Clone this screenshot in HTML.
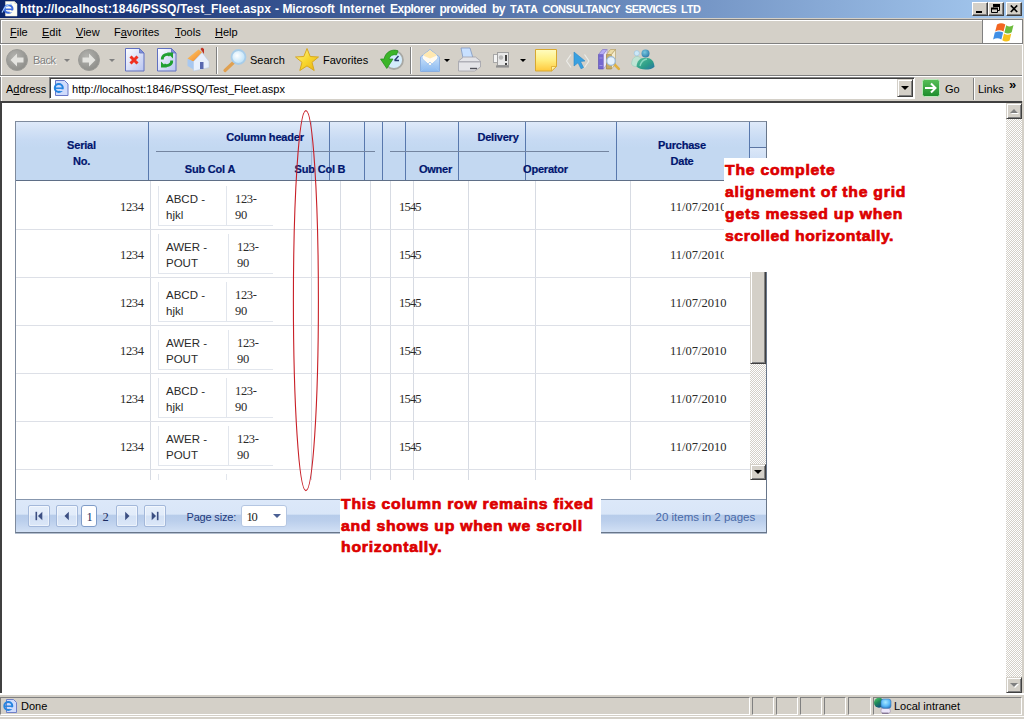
<!DOCTYPE html>
<html>
<head>
<meta charset="utf-8">
<title>IE</title>
<style>
html,body{margin:0;padding:0;}
body{width:1024px;height:719px;overflow:hidden;background:#d4d0c8;font-family:"Liberation Sans",sans-serif;font-size:11px;color:#000;position:relative;}
.abs{position:absolute;}
.t{position:absolute;white-space:nowrap;line-height:14px;}
#title{left:0;top:0;width:1024px;height:18px;background:linear-gradient(to right,#0a246a 0%,#a6caf0 100%);}
#title .t{color:#fff;font-weight:bold;font-size:12px;top:2px;}
.cb{position:absolute;top:2px;width:16px;height:14px;background:#d4d0c8;box-sizing:border-box;border:1px solid;border-color:#fff #404040 #404040 #fff;box-shadow:inset -1px -1px 0 #808080;}
#menu{left:0;top:19px;width:1024px;height:24px;background:#d4d0c8;}
#menu .t{top:6px;}
u{text-decoration:underline;}
.hsep{position:absolute;left:0;width:1024px;height:1px;}
#content{left:0;top:101px;width:1022px;height:592px;background:#fff;border-left:2px solid #404040;border-top:2px solid #404040;box-sizing:border-box;}
.chk{background-image:conic-gradient(#fff 25%,#d4d0c8 0 50%,#fff 0 75%,#d4d0c8 0);background-size:2px 2px;}
.btn3d{position:absolute;background:#d4d0c8;box-sizing:border-box;border:1px solid;border-color:#d4d0c8 #404040 #404040 #d4d0c8;box-shadow:inset 1px 1px 0 #fff,inset -1px -1px 0 #808080;}
.ser{position:absolute;white-space:nowrap;font-family:"Liberation Serif",serif;font-size:12.5px;line-height:14px;color:#2a2a2a;letter-spacing:-0.35px;}
.hd{position:absolute;white-space:nowrap;font-weight:bold;font-size:11px;line-height:14px;color:#00156e;letter-spacing:-0.2px;-webkit-text-stroke:0.2px #00156e;}
.cell{position:absolute;white-space:nowrap;font-size:11.5px;line-height:16px;color:#2a2a2a;}
.vl{position:absolute;width:1px;background:#d7dbe3;}
.hl{position:absolute;height:1px;background:#dde0e7;}
.hv{position:absolute;width:1px;background:#5878ad;top:122px;height:58px;}
.red{position:absolute;color:#dc0000;font-weight:bold;font-size:15px;line-height:22px;background:#fff;white-space:nowrap;}
.red span{display:block;transform-origin:0 50%;transform:scaleX(1.05);-webkit-text-stroke:0.7px #dc0000;letter-spacing:0.72px;}
.pb{position:absolute;top:505px;width:22px;height:22px;box-sizing:border-box;border:1px solid #a3b8da;border-radius:2px;background:linear-gradient(to bottom,#e6effb 0,#e2ecfa 45%,#d3e1f5 50%,#dbe7f8 100%);box-shadow:inset 0 0 0 1px rgba(255,255,255,0.5);}
.sp{position:absolute;top:697px;height:18px;box-sizing:border-box;border:1px solid;border-color:#808080 #fff #fff #808080;}
</style>
</head>
<body>
<!-- TITLE BAR -->
<div id="title" class="abs">
  <div class="t" style="left:20px;letter-spacing:0.122px">http://localhost:1846/PSSQ/Test_Fleet.aspx</div>
  <div class="t" style="left:275px;letter-spacing:-0.030px">-</div>
  <div class="t" style="left:282.5px;letter-spacing:-0.219px">Microsoft</div>
  <div class="t" style="left:339.5px;letter-spacing:0.183px">Internet</div>
  <div class="t" style="left:390px;letter-spacing:-0.518px">Explorer</div>
  <div class="t" style="left:439.5px;letter-spacing:-0.530px">provided</div>
  <div class="t" style="left:492px;letter-spacing:-0.530px">by</div>
  <div class="t" style="left:510px;font-size:11px;letter-spacing:0.372px">TATA</div>
  <div class="t" style="left:542.5px;font-size:11px;letter-spacing:-0.457px">CONSULTANCY</div>
  <div class="t" style="left:625px;font-size:11px;letter-spacing:-0.562px">SERVICES</div>
  <div class="t" style="left:681px;font-size:11px;letter-spacing:-0.275px">LTD</div>
  <div class="cb" style="left:972px"><div class="abs" style="left:3px;top:8px;width:6px;height:2px;background:#000"></div></div>
  <div class="cb" style="left:988px">
    <svg class="abs" style="left:2px;top:1px" width="10" height="10" viewBox="0 0 10 10"><path d="M2.5 0.5h6v2h-6zM2.5 2.5v1M8.5 2v4.500h-2" fill="none" stroke="#000" stroke-width="1"/><path d="M2 1h7" stroke="#000" stroke-width="2"/><path d="M0.500 4.500h6v4h-6z" fill="none" stroke="#000"/><path d="M0 4.500h7" stroke="#000" stroke-width="2"/></svg>
  </div>
  <div class="cb" style="left:1006px">
    <svg class="abs" style="left:3px;top:2px" width="9" height="8" viewBox="0 0 9 8"><path d="M0.800 0.500L7.200 7M7.200 0.500L0.800 7" stroke="#000" stroke-width="1.700" fill="none"/></svg>
  </div>
</div>
<div class="hsep" style="top:18px;background:#d4d0c8"></div>
<!-- MENU -->
<div id="menu" class="abs">
  <div class="abs" style="left:0;top:0;width:1022px;height:1px;background:#808080"></div>
  <div class="abs" style="left:1px;top:1px;width:981px;height:1px;background:#fff"></div>
  <div class="abs" style="left:0;top:0;width:1px;height:82px;background:#808080"></div>
  <div class="abs" style="left:1px;top:1px;width:1px;height:81px;background:#fff"></div>
  <div class="t" style="left:10px"><u>F</u>ile</div>
  <div class="t" style="left:42px"><u>E</u>dit</div>
  <div class="t" style="left:76px"><u>V</u>iew</div>
  <div class="t" style="left:114px">F<u>a</u>vorites</div>
  <div class="t" style="left:175px"><u>T</u>ools</div>
  <div class="t" style="left:215px"><u>H</u>elp</div>
  <div class="abs" style="left:982px;top:1px;width:1px;height:23px;background:#808080"></div>
  <div class="abs" id="throb" style="left:983px;top:1px;width:39px;height:23px;background:#fff"></div>
  <div class="abs" style="left:1022px;top:0;width:1px;height:25px;background:#808080"></div>
</div>
<div class="hsep" style="top:43px;background:#808080"></div>
<div class="hsep" style="top:44px;background:#fff"></div>
<!-- TOOLBAR -->
<div id="toolbar" class="abs" style="left:0;top:45px;width:1024px;height:30px;">
  <div class="t" style="left:34px;top:9px;color:#fff;letter-spacing:-0.5px">Back</div>
  <div class="t" style="left:33px;top:8px;color:#808080;letter-spacing:-0.5px">Back</div>
  <div class="t" style="left:250px;top:8px">Search</div>
  <div class="t" style="left:323px;top:8px">Favorites</div>
  <div class="abs" style="left:216px;top:2px;width:1px;height:27px;background:#808080"></div>
  <div class="abs" style="left:217px;top:2px;width:1px;height:27px;background:#fff"></div>
  <div class="abs" style="left:410px;top:2px;width:1px;height:27px;background:#808080"></div>
  <div class="abs" style="left:411px;top:2px;width:1px;height:27px;background:#fff"></div>
</div>
<div class="hsep" style="top:75px;background:#808080"></div>
<div class="hsep" style="top:76px;background:#fff"></div>
<!-- ADDRESS -->
<div id="addr" class="abs" style="left:0;top:77px;width:1024px;height:24px;">
  <div class="t" style="left:6px;top:5px">A<u>d</u>dress</div>
  <div class="abs" style="left:49px;top:0px;width:866px;height:22px;background:#fff;box-sizing:border-box;border:1px solid;border-color:#808080 #fff #fff #808080;box-shadow:inset 1px 1px 0 #404040;"></div>
  <div class="t" style="left:72px;top:5px;letter-spacing:0.02px">http://localhost:1846/PSSQ/Test_Fleet.aspx</div>
  <div class="btn3d" style="left:897px;top:2px;width:16px;height:18px;"><div class="abs" style="left:3px;top:6px;width:0;height:0;border:4px solid transparent;border-top:4px solid #000;border-bottom:0"></div></div>
  <div class="t" style="left:945px;top:5px">Go</div>
  <div class="abs" style="left:973px;top:1px;width:1px;height:22px;background:#808080"></div>
  <div class="abs" style="left:974px;top:1px;width:1px;height:22px;background:#fff"></div>
  <div class="t" style="left:978px;top:5px">Links</div>
  <div class="t" style="left:1009px;top:1px;font-weight:bold;font-size:13px">»</div>
</div>
<svg class="abs" style="left:0;top:0;z-index:10;pointer-events:none" width="1024" height="719" viewBox="0 0 1024 719">
<defs>
<linearGradient id="gPage" x1="0" y1="0" x2="1" y2="1"><stop offset="0" stop-color="#ffffff"/><stop offset="1" stop-color="#b8c4f0"/></linearGradient>
<radialGradient id="gGrey" cx="0.4" cy="0.35" r="0.7"><stop offset="0" stop-color="#b4b4b0"/><stop offset="1" stop-color="#8c8c88"/></radialGradient>
<radialGradient id="gLens" cx="0.4" cy="0.4" r="0.7"><stop offset="0" stop-color="#ffffff"/><stop offset="1" stop-color="#b0dcf8"/></radialGradient>
<linearGradient id="gStar" x1="0" y1="0" x2="1" y2="1"><stop offset="0" stop-color="#fff8a0"/><stop offset="0.5" stop-color="#f8d830"/><stop offset="1" stop-color="#e8b010"/></linearGradient>
<linearGradient id="gNote" x1="0" y1="0" x2="0" y2="1"><stop offset="0" stop-color="#fffcc0"/><stop offset="0.5" stop-color="#ffee80"/><stop offset="1" stop-color="#ffc83c"/></linearGradient>
<linearGradient id="gGo" x1="0" y1="0" x2="0" y2="1"><stop offset="0" stop-color="#58c058"/><stop offset="1" stop-color="#1c8c2c"/></linearGradient>
<linearGradient id="gMail" x1="0" y1="0" x2="0" y2="1"><stop offset="0" stop-color="#e8f4ff"/><stop offset="1" stop-color="#88b8f0"/></linearGradient>
<linearGradient id="gRoof" x1="0" y1="0" x2="1" y2="1"><stop offset="0" stop-color="#ffd070"/><stop offset="1" stop-color="#f08020"/></linearGradient>
</defs>
<!-- title icon -->
<path d="M5.500 1.500h9l2.500 2.500v12h-11.500z" fill="#fdfdf4" stroke="#e8e8d8" stroke-width="0.500"/>
<path d="M14.500 1.500v2.500h2.500" fill="#d8d8c8"/>
<ellipse cx="8.500" cy="9" rx="4" ry="3.800" fill="none" stroke="#3c6ce0" stroke-width="2"/>
<path d="M5 9.300h7.500" stroke="#3c6ce0" stroke-width="1.600"/>
<path d="M2 12.500c2-5 6-8.500 10-8.500" stroke="#a8d0ff" stroke-width="1.200" fill="none"/>
<rect x="9.500" y="10.500" width="4.500" height="2" fill="#fdfdf4"/>
<!-- back -->
<circle cx="17" cy="60" r="10.500" fill="url(#gGrey)" stroke="#9c9c98" stroke-width="1"/>
<path d="M10.500 60l6.500-6.500v4h6.500v5h-6.500v4z" fill="#e4e4e0"/>
<path d="M64 59h6l-3 3z" fill="#808080"/>
<!-- forward -->
<circle cx="89" cy="60" r="10.500" fill="url(#gGrey)" stroke="#9c9c98" stroke-width="1"/>
<path d="M95.500 60l-6.500-6.500v4h-6.500v5h6.500v4z" fill="#e4e4e0"/>
<path d="M109 59h6l-3 3z" fill="#808080"/>
<!-- stop -->
<path d="M125.500 48.500h14l4.500 4.500v18h-18.500z" fill="url(#gPage)" stroke="#6070c0" stroke-width="1"/>
<path d="M139.500 48.500v4.500h4.500z" fill="#8090d8" stroke="#6070c0" stroke-width="0.800"/>
<path d="M130.500 56.500l7 7M137.500 56.500l-7 7" stroke="#f03020" stroke-width="3" fill="none"/>
<!-- refresh -->
<path d="M157.500 48.500h14l4.500 4.500v18h-18.500z" fill="url(#gPage)" stroke="#6070c0" stroke-width="1"/>
<path d="M171.500 48.500v4.500h4.500z" fill="#8090d8" stroke="#6070c0" stroke-width="0.800"/>
<path d="M162.300 59.500a4.700 4.700 0 0 1 7.700-4" stroke="#20a030" stroke-width="2.800" fill="none"/>
<path d="M171.700 60.500a4.700 4.700 0 0 1-7.700 4" stroke="#20a030" stroke-width="2.800" fill="none"/>
<path d="M167 52.500h6v6z" fill="#20a030"/>
<path d="M167 67.500h-6v-6z" fill="#20a030"/>
<!-- home -->
<path d="M187.500 59l11.500-9.500 3.500 3.500-8 9v8l-7-4z" fill="#a8c8f0"/>
<path d="M187.500 58.500l11-9 4 3-9 9z" fill="url(#gRoof)"/>
<path d="M193.500 61.500l8.500-9 7 9v6l-15.500 3.500z" fill="#e8f0fc" stroke="#b0c8e8" stroke-width="0.500"/>
<path d="M200.500 49l1.500-1.500 2 1.500v5z" fill="#c03020"/>
<rect x="200" y="62" width="3.500" height="7" fill="#5868b0"/>
<!-- search -->
<path d="M233.500 62.500l-8.500 8" stroke="#e0a050" stroke-width="3.200" stroke-linecap="round"/>
<circle cx="238.500" cy="57" r="7" fill="url(#gLens)" stroke="#a8cce8" stroke-width="1.800"/>
<!-- favorites star -->
<path d="M307 48.500l3.200 8 8.300 0.500-6.500 5.300 2.200 8.200-7.200-4.600-7.200 4.600 2.200-8.200-6.500-5.300 8.300-0.500z" fill="url(#gStar)" stroke="#d8a820" stroke-width="1" stroke-linejoin="round"/>
<!-- history -->
<circle cx="394" cy="60" r="9" fill="#d4ecfc" stroke="#a8a8a4" stroke-width="1.800"/>
<path d="M394.500 60.500l4-4.500M394.500 60.500h4.500" stroke="#283c70" stroke-width="1.400" fill="none"/>
<path d="M398 50.800A10.200 10.200 0 0 0 384.200 59h-3.700l6.300 9.500 6.200-9.500h-4A5.800 5.800 0 0 1 396.500 55z" fill="#3cb428" stroke="#1c8c18" stroke-width="0.700" stroke-linejoin="round"/>
<!-- mail -->
<path d="M420.500 57l9.500-7.500 9.500 7.500v14.500h-19z" fill="url(#gMail)" stroke="#80a8e0" stroke-width="0.800"/>
<path d="M423 55l7-5 7 5-7 5z" fill="#ffe8b0"/>
<path d="M423 55.500l7 3 7-3v4l-7 6-7-6z" fill="#fffaf0"/>
<path d="M420.500 71.500l9.500-9.500 9.500 9.500M420.500 57l9.500 9 9.500-9" fill="none" stroke="#a0c4f0" stroke-width="0.800"/>
<path d="M444 59h6l-3 3z" fill="#000"/>
<!-- print -->
<path d="M461 48h9l3 10h-10z" fill="#c8e0ff" stroke="#8098c0" stroke-width="0.800"/>
<path d="M458.500 61l5-4h12l5 4v6l-6 4h-16z" fill="#e4e4e8" stroke="#a0a0a8" stroke-width="0.800"/>
<path d="M458.500 61h21.500v1.500h-21.500z" fill="#b0b0b8"/>
<path d="M470 68.500h7" stroke="#505058" stroke-width="1.400"/>
<!-- edit (grey) -->
<rect x="493.500" y="54.500" width="9" height="8" fill="#f4f4f4" stroke="#a8a8a8"/>
<rect x="497.500" y="52.500" width="11" height="13" fill="#e8e8e8" stroke="#a0a0a0"/>
<circle cx="501" cy="57.500" r="2.200" fill="#b8b8b8"/>
<rect x="505" y="55" width="2" height="6" fill="#404040"/>
<rect x="505" y="63" width="2" height="2" fill="#404040"/>
<path d="M496 66.500h13" stroke="#909090" stroke-width="2.200"/>
<path d="M520 59h6l-3 3z" fill="#000"/>
<!-- note -->
<path d="M535.500 49.500h21v17l-5 4.500h-16z" fill="url(#gNote)" stroke="#d8a830" stroke-width="1"/>
<path d="M556.500 66.500h-5v4.500z" fill="#fff0a0" stroke="#d8a830" stroke-width="0.800"/>
<!-- cursor -->
<path d="M566.500 61l4.500-6.500M566.500 61l4.500 6.500M589 61l-4.500-6.500M589 61l-4.500 6.500" stroke="#ecece8" stroke-width="1.200" fill="none"/>
<path d="M574 52l11 9-4.500 0.500 3 6-2.500 1.300-3-6-4 3.200z" fill="#38a0e0" stroke="#2888c8" stroke-width="0.600"/>
<!-- books -->
<path d="M598.500 54.500h5v14.500h-5z" fill="#7468d0" stroke="#5848b0" stroke-width="0.600"/>
<path d="M598.500 54.500l4-5h4.500l-3.500 5z" fill="#b4acf4" stroke="#6858c0" stroke-width="0.500"/>
<path d="M603.500 54.500l3.500-5v14.500l-3.500 5z" fill="#ece8fa" stroke="#8878c8" stroke-width="0.500"/>
<path d="M599.500 58h3M599.500 65.500h3" stroke="#a8a0e8" stroke-width="0.800"/>
<path d="M606.500 54.500h5v14.500h-5z" fill="#c8ac60" stroke="#987c38" stroke-width="0.600"/>
<path d="M606.500 54.500l4-5h5l-4 5z" fill="#ecdca8" stroke="#a88c48" stroke-width="0.500"/>
<path d="M611.500 54.500l4-5v14.500l-4 5z" fill="#f4ecd0" stroke="#a89050" stroke-width="0.500"/>
<path d="M614.500 64.500l4.300 4.300" stroke="#e0b040" stroke-width="2.600" stroke-linecap="round"/>
<circle cx="611" cy="61" r="4.300" fill="#e4f2ff" stroke="#9cb8d4" stroke-width="1.300"/>
<!-- messenger -->
<defs><linearGradient id="gMs1" x1="0" y1="0" x2="1" y2="1"><stop offset="0" stop-color="#58c098"/><stop offset="0.600" stop-color="#2c9c88"/><stop offset="1" stop-color="#2870a8"/></linearGradient>
<radialGradient id="gMs2" cx="0.400" cy="0.350" r="0.700"><stop offset="0" stop-color="#78c8e0"/><stop offset="1" stop-color="#2c78a8"/></radialGradient></defs>
<circle cx="636.800" cy="53.200" r="2.600" fill="#cce8f8" stroke="#88b8d8" stroke-width="0.500"/>
<path d="M631.500 64c0.500-5 2.500-7.500 5.500-7.500s5 2 5.500 6l-4 4c-3 0.500-6 0-7-2.500z" fill="#c0e4d4" stroke="#90c8b8" stroke-width="0.500"/>
<circle cx="645.500" cy="53.500" r="4" fill="url(#gMs2)"/>
<path d="M636.500 66.500c0.500-6 3.500-8.800 9-8.800s8.500 3 9 9c-1.500 2-5.500 2.800-9 2.800s-7.500-1-9-3z" fill="url(#gMs1)"/>
<path d="M640 66c1-4 3.500-6.500 7-7" stroke="#88d8c0" stroke-width="1.300" fill="none"/>
<!-- address icon -->
<path d="M55.500 80.500h9l3.500 3.500v11.500h-12.500z" fill="#d0dcfc" stroke="#6878c8" stroke-width="1"/>
<ellipse cx="58.800" cy="88" rx="4" ry="4" fill="none" stroke="#2484e0" stroke-width="2"/>
<path d="M55 88.200h8" stroke="#2484e0" stroke-width="1.500"/>
<rect x="60" y="89.300" width="4.500" height="1.800" fill="#d0dcfc"/>
<!-- go -->
<rect x="922.500" y="79.500" width="17" height="17" rx="2" fill="url(#gGo)" stroke="#b8e8b8" stroke-width="1"/>
<path d="M925 88h10M931 83.500l4.500 4.500-4.500 4.500" stroke="#fff" stroke-width="2" fill="none"/>
<!-- windows flag -->
<path d="M997 24.500q4-2.500 8.300 0l-1.800 7q-4-2.300-8.300 0z" fill="#f26522"/>
<path d="M1006.200 25.300q3.800 2.500 7.300-0.300l-1.800 7.200q-3.600 2.500-7.300 0.200z" fill="#6cbb3c"/>
<path d="M994.800 32.600q4.200-2.400 8.300 0l-1.700 6.800q-4.200-2.300-8.300 0z" fill="#3f8fe6"/>
<path d="M1004 33.500q3.700 2.400 7.300 0l-1.700 7q-3.700 2.300-7.300-0.200z" fill="#f6c21c"/>
<!-- status ie icon -->
<path d="M6.500 699.500h7l3 3v10h-10z" fill="#d0dcfc" stroke="#7080c8" stroke-width="1"/>
<ellipse cx="8.300" cy="706" rx="4" ry="4" fill="none" stroke="#2484e0" stroke-width="2"/>
<path d="M4.500 706.200h8" stroke="#2484e0" stroke-width="1.500"/>
<rect x="9.500" y="707.300" width="4.500" height="1.800" fill="#d0dcfc"/>
<!-- local intranet icon -->
<defs><linearGradient id="gGlobe" x1="0" y1="0" x2="0.600" y2="1"><stop offset="0" stop-color="#58d070"/><stop offset="0.500" stop-color="#208858"/><stop offset="1" stop-color="#0c4c84"/></linearGradient>
<radialGradient id="gMon" cx="0.450" cy="0.350" r="0.700"><stop offset="0" stop-color="#a8e8ff"/><stop offset="0.600" stop-color="#58b8f8"/><stop offset="1" stop-color="#2c78c0"/></radialGradient></defs>
<circle cx="879" cy="702.800" r="5" fill="url(#gGlobe)"/>
<path d="M883 713.300c-2-0.300-2.500-2-1.500-5h8c1.500 3 1 4.700-1 5z" fill="#ece6fa" stroke="#8c7ca0" stroke-width="0.500"/>
<path d="M882 713.200h6.500" stroke="#5c4870" stroke-width="0.800"/>
<rect x="881" y="699" width="10" height="9.300" rx="2.500" fill="url(#gMon)" stroke="#3c78b8" stroke-width="0.600"/>
</svg>

<!-- CONTENT -->
<div id="content" class="abs"></div>
<div class="abs" style="left:15px;top:121px;width:752px;height:412px;box-sizing:border-box;border:1px solid #7f8b9d;border-right-color:#68768a;border-bottom-color:#68768a;"></div>
<div class="abs" style="left:16px;top:122px;width:750px;height:58px;background:linear-gradient(to bottom,#dfeafa 0,#d3e2f6 8px,#c7daf3 18px,#c3d8f1 26px,#c3d8f1 100%);"></div>
<div class="abs" style="left:16px;top:180px;width:750px;height:1px;background:#5f6f87"></div>
<div class="hv" style="left:148px"></div>
<div class="hv" style="left:329px"></div>
<div class="hv" style="left:364px"></div>
<div class="hv" style="left:382px"></div>
<div class="hv" style="left:405px"></div>
<div class="hv" style="left:458px"></div>
<div class="hv" style="left:525px"></div>
<div class="hv" style="left:616px"></div>
<div class="hv" style="left:749px"></div>
<div class="hv" style="left:311px;top:122px;height:29px;background:#b4c8e6"></div>
<div class="hv" style="left:311px;top:152px;height:28px;background:#9fb6d8"></div>
<div class="abs" style="left:156px;top:151px;width:219px;height:1px;background:#7485a0"></div>
<div class="abs" style="left:390px;top:151px;width:219px;height:1px;background:#7485a0"></div>
<div class="abs" style="left:750px;top:148px;width:16px;height:32px;background:linear-gradient(to bottom,#dbe7f8 0,#c7daf3 18px,#c3d8f1 26px)"></div>
<div class="abs" style="left:750px;top:147px;width:16px;height:1px;background:#5b75a3"></div>
<div class="hd" style="left:-18.5px;width:200px;text-align:center;top:138px">Serial</div>
<div class="hd" style="left:-18.5px;width:200px;text-align:center;top:154px">No.</div>
<div class="hd" style="left:165px;width:200px;text-align:center;top:130px">Column header</div>
<div class="hd" style="left:110px;width:200px;text-align:center;top:162px">Sub Col A</div>
<div class="hd" style="left:220px;width:200px;text-align:center;top:162px">Sub Col B</div>
<div class="hd" style="left:335.5px;width:200px;text-align:center;top:162px">Owner</div>
<div class="hd" style="left:398px;width:200px;text-align:center;top:130px">Delivery</div>
<div class="hd" style="left:445.5px;width:200px;text-align:center;top:162px">Operator</div>
<div class="hd" style="left:582px;width:200px;text-align:center;top:138px">Purchase</div>
<div class="hd" style="left:582px;width:200px;text-align:center;top:154px">Date</div>
<div class="vl" style="left:150px;top:181px;height:299px"></div>
<div class="vl" style="left:311px;top:181px;height:299px"></div>
<div class="vl" style="left:340px;top:181px;height:299px"></div>
<div class="vl" style="left:370px;top:181px;height:299px"></div>
<div class="vl" style="left:390px;top:181px;height:299px"></div>
<div class="vl" style="left:413px;top:181px;height:299px"></div>
<div class="vl" style="left:468px;top:181px;height:299px"></div>
<div class="vl" style="left:535px;top:181px;height:299px"></div>
<div class="vl" style="left:630px;top:181px;height:299px"></div>
<div class="hl" style="left:16px;top:229px;width:734px"></div>
<div class="hl" style="left:16px;top:277px;width:734px"></div>
<div class="hl" style="left:16px;top:325px;width:734px"></div>
<div class="hl" style="left:16px;top:373px;width:734px"></div>
<div class="hl" style="left:16px;top:421px;width:734px"></div>
<div class="hl" style="left:16px;top:469px;width:734px"></div>
<div class="ser" style="left:120px;top:200px">1234</div>
<div class="ser" style="left:399px;top:200px;letter-spacing:-0.8px">1545</div>
<div class="ser" style="left:670px;top:200px;letter-spacing:0px">11/07/2010</div>
<div class="vl" style="left:158px;top:186px;height:40px;background:#e2e6ed"></div>
<div class="vl" style="left:226px;top:186px;height:40px;background:#e2e6ed"></div>
<div class="hl" style="left:158px;top:225px;width:115px;background:#e2e6ed"></div>
<div class="cell" style="left:166px;top:190.7px">ABCD -<br>hjkl</div>
<div class="ser" style="left:235px;top:190.5px;line-height:16px">123-<br>90</div>
<div class="ser" style="left:120px;top:248px">1234</div>
<div class="ser" style="left:399px;top:248px;letter-spacing:-0.8px">1545</div>
<div class="ser" style="left:670px;top:248px;letter-spacing:0px">11/07/2010</div>
<div class="vl" style="left:158px;top:234px;height:40px;background:#e2e6ed"></div>
<div class="vl" style="left:228px;top:234px;height:40px;background:#e2e6ed"></div>
<div class="hl" style="left:158px;top:273px;width:115px;background:#e2e6ed"></div>
<div class="cell" style="left:166px;top:238.7px">AWER -<br>POUT</div>
<div class="ser" style="left:237px;top:238.5px;line-height:16px">123-<br>90</div>
<div class="ser" style="left:120px;top:296px">1234</div>
<div class="ser" style="left:399px;top:296px;letter-spacing:-0.8px">1545</div>
<div class="ser" style="left:670px;top:296px;letter-spacing:0px">11/07/2010</div>
<div class="vl" style="left:158px;top:282px;height:40px;background:#e2e6ed"></div>
<div class="vl" style="left:226px;top:282px;height:40px;background:#e2e6ed"></div>
<div class="hl" style="left:158px;top:321px;width:115px;background:#e2e6ed"></div>
<div class="cell" style="left:166px;top:286.7px">ABCD -<br>hjkl</div>
<div class="ser" style="left:235px;top:286.5px;line-height:16px">123-<br>90</div>
<div class="ser" style="left:120px;top:344px">1234</div>
<div class="ser" style="left:399px;top:344px;letter-spacing:-0.8px">1545</div>
<div class="ser" style="left:670px;top:344px;letter-spacing:0px">11/07/2010</div>
<div class="vl" style="left:158px;top:330px;height:40px;background:#e2e6ed"></div>
<div class="vl" style="left:228px;top:330px;height:40px;background:#e2e6ed"></div>
<div class="hl" style="left:158px;top:369px;width:115px;background:#e2e6ed"></div>
<div class="cell" style="left:166px;top:334.7px">AWER -<br>POUT</div>
<div class="ser" style="left:237px;top:334.5px;line-height:16px">123-<br>90</div>
<div class="ser" style="left:120px;top:392px">1234</div>
<div class="ser" style="left:399px;top:392px;letter-spacing:-0.8px">1545</div>
<div class="ser" style="left:670px;top:392px;letter-spacing:0px">11/07/2010</div>
<div class="vl" style="left:158px;top:378px;height:40px;background:#e2e6ed"></div>
<div class="vl" style="left:226px;top:378px;height:40px;background:#e2e6ed"></div>
<div class="hl" style="left:158px;top:417px;width:115px;background:#e2e6ed"></div>
<div class="cell" style="left:166px;top:382.7px">ABCD -<br>hjkl</div>
<div class="ser" style="left:235px;top:382.5px;line-height:16px">123-<br>90</div>
<div class="ser" style="left:120px;top:440px">1234</div>
<div class="ser" style="left:399px;top:440px;letter-spacing:-0.8px">1545</div>
<div class="ser" style="left:670px;top:440px;letter-spacing:0px">11/07/2010</div>
<div class="vl" style="left:158px;top:426px;height:40px;background:#e2e6ed"></div>
<div class="vl" style="left:228px;top:426px;height:40px;background:#e2e6ed"></div>
<div class="hl" style="left:158px;top:465px;width:115px;background:#e2e6ed"></div>
<div class="cell" style="left:166px;top:430.7px">AWER -<br>POUT</div>
<div class="ser" style="left:237px;top:430.5px;line-height:16px">123-<br>90</div>
<div class="vl" style="left:158px;top:474px;height:6px;background:#e2e6ed"></div>
<div class="vl" style="left:226px;top:474px;height:6px;background:#e2e6ed"></div>
<div class="abs chk" style="left:750px;top:181px;width:16px;height:299px"></div>
<div class="btn3d" style="left:750px;top:181px;width:16px;height:16px"></div>
<div class="btn3d" style="left:750px;top:197px;width:16px;height:167px"></div>
<div class="btn3d" style="left:750px;top:464px;width:16px;height:16px"><div class="abs" style="left:3px;top:5px;width:0;height:0;border:4px solid transparent;border-top:4px solid #000;border-bottom:0"></div></div>
<div class="abs" style="left:16px;top:499px;width:750px;height:1px;background:#8797ae"></div>
<div class="abs" style="left:15px;top:533px;width:752px;height:1px;background:#b4bfcf"></div>
<div class="abs" style="left:16px;top:500px;width:750px;height:32px;background:linear-gradient(to bottom,#dce8f9 0,#d9e6f8 14px,#b7ccea 15.5px,#bbcfec 21px,#d0dff4 31px,#d4e2f6 100%);"></div>
<div class="pb" style="left:28px"></div>
<div class="pb" style="left:56px"></div>
<div class="pb" style="left:116px"></div>
<div class="pb" style="left:144px"></div>
<svg class="abs" style="left:28px;top:505px" width="140" height="22" viewBox="28 505 140 22"><rect x="35.500" y="511.800" width="1.600" height="8.400" fill="#3c4f82"/><path d="M42.300 511.800v8.400l-4.300-4.200z" fill="#3c4f82"/><path d="M68.800 511.800v8.400l-4.300-4.200z" fill="#3c4f82"/><path d="M125.200 511.800v8.400l4.300-4.200z" fill="#3c4f82"/><path d="M151.700 511.800v8.400l4.300-4.200z" fill="#3c4f82"/><rect x="156.900" y="511.800" width="1.600" height="8.400" fill="#3c4f82"/></svg>
<div class="abs" style="left:81px;top:505px;width:16px;height:22px;box-sizing:border-box;border:1px solid #7f9cc8;border-radius:3px;background:#fff"></div>
<div class="ser" style="left:86.500px;top:509.500px;color:#1a2a60;font-size:12.500px">1</div>
<div class="ser" style="left:102.500px;top:509.500px;color:#1a2a60;font-size:12.500px">2</div>
<div class="t" style="left:186.500px;top:509.500px;font-size:11px;color:#1e3a7c;letter-spacing:-0.18px">Page size:</div>
<div class="abs" style="left:241px;top:505px;width:46px;height:22px;box-sizing:border-box;border:1px solid #b4c6e2;border-radius:3px;background:#fff"></div>
<div class="ser" style="left:246.500px;top:510px;color:#222;letter-spacing:-1.2px">10</div>
<div class="abs" style="left:273px;top:514px;width:0;height:0;border:4px solid transparent;border-top:4px solid #4a6094;border-bottom:0"></div>
<div class="t" style="left:655.500px;top:510px;font-size:11.500px;color:#4a6aa8">20 items in 2 pages</div>
<svg class="abs" style="left:285px;top:105px" width="42" height="392" viewBox="285 105 42 392"><ellipse cx="305.9" cy="300.6" rx="12.5" ry="190" fill="none" stroke="#c81e26" stroke-width="1.1"/></svg>
<div class="red" style="left:724px;top:158px;width:199px;height:114px;padding-left:1px"><span style="margin-top:1px">The complete</span><span>alignement of the grid</span><span>gets messed up when</span><span style="letter-spacing:0.55px">scrolled horizontally.</span></div>
<div class="red" style="left:340px;top:493px;width:260px;height:68px;line-height:21.5px;padding-left:1px"><span>This column row remains fixed</span><span>and shows up when we scroll</span><span>horizontally.</span></div>
<!-- main scrollbar -->
<div class="abs chk" style="left:1006px;top:103px;width:16px;height:590px;"></div>
<div class="btn3d" style="left:1006px;top:103px;width:16px;height:16px;"><div class="abs" style="left:4px;top:6px;width:0;height:0;border:4px solid transparent;border-bottom:4px solid #fff;border-top:0"></div><div class="abs" style="left:3px;top:5px;width:0;height:0;border:4px solid transparent;border-bottom:4px solid #808080;border-top:0"></div></div>
<div class="btn3d" style="left:1006px;top:677px;width:16px;height:16px;"><div class="abs" style="left:4px;top:6px;width:0;height:0;border:4px solid transparent;border-top:4px solid #fff;border-bottom:0"></div><div class="abs" style="left:3px;top:5px;width:0;height:0;border:4px solid transparent;border-top:4px solid #808080;border-bottom:0"></div></div>
<!-- right window edge -->
<div class="abs" style="left:1023px;top:19px;width:1px;height:700px;background:#d4d0c8"></div>
<div class="abs" style="left:1022px;top:44px;width:1px;height:57px;background:#fff"></div>
<div class="abs" style="left:1022px;top:101px;width:1px;height:618px;background:#d4d0c8"></div>
<!-- STATUS -->
<div id="status" class="abs" style="left:0;top:693px;width:1024px;height:26px;background:#d4d0c8;">
  <div class="t" style="left:21px;top:6px">Done</div>
  <div class="t" style="left:894px;top:6px">Local intranet</div>
</div>
<div class="hsep" style="top:693px;height:2px;background:#fff"></div>
<div class="hsep" style="top:716px;background:#fff"></div>
<div class="sp" style="left:0;width:750px"></div>
<div class="sp" style="left:752px;width:22px"></div>
<div class="sp" style="left:776px;width:22px"></div>
<div class="sp" style="left:800px;width:22px"></div>
<div class="sp" style="left:824px;width:22px"></div>
<div class="sp" style="left:848px;width:23px"></div>
<div class="sp" style="left:873px;width:149px"></div>
</body>
</html>
